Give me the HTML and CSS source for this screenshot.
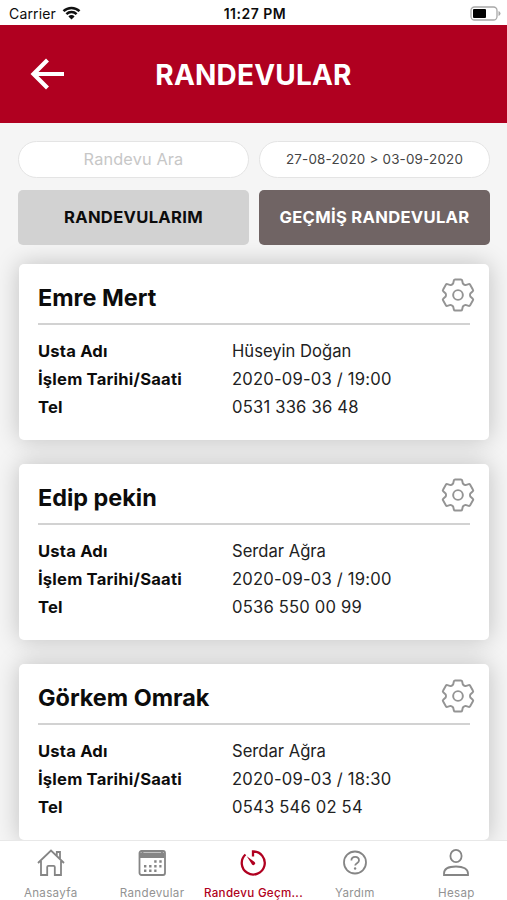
FILE: index.html
```html
<!DOCTYPE html>
<html lang="tr">
<head>
<meta charset="utf-8">
<meta name="viewport" content="width=device-width, initial-scale=1">
<title>Randevular</title>
<link rel="stylesheet" href="styles.css">
</head>
<body>

<svg class="defs" width="0" height="0">
  <symbol id="gear" viewBox="-17.5 -17.5 35 35">
    <path d="M-5-11.8L-4.2-15.2Q-4-16-3-16H3Q4-16 4.2-15.2L5-11.8Q6.5-10.2 7.7-10.2L11-11.2Q12-11.5 12.5-10.6L15.4-5.5Q16-4.5 15.2-3.9L12.7-1.6Q12 0 12.7 1.6L15.2 3.9Q16 4.5 15.4 5.5L12.5 10.6Q12 11.5 11 11.2L7.7 10.2Q6.5 10.2 5 11.8L4.2 15.2Q4 16 3 16H-3Q-4 16-4.2 15.2L-5 11.8Q-6.5 10.2-7.7 10.2L-11 11.2Q-12 11.5-12.5 10.6L-15.4 5.5Q-16 4.5-15.2 3.9L-12.7 1.6Q-12 0-12.7-1.6L-15.2-3.9Q-16-4.5-15.4-5.5L-12.5-10.6Q-12-11.5-11-11.2L-7.7-10.2Q-6.5-10.2-5-11.8Z"/>
    <circle r="5"/>
  </symbol>
</svg>

<div class="app">
  <div class="status">
    <div class="carrier">
      <span>Carrier</span>
      <svg width="19" height="14" viewBox="0 0 18 14">
        <path d="M1 5.2a11.5 11.5 0 0 1 16 0M3.9 8.2a7.3 7.3 0 0 1 10.2 0" fill="none" stroke="#111" stroke-width="2.5"/>
        <path d="M9 13.6L5.9 10.4a4.4 4.4 0 0 1 6.2 0z" fill="#111"/>
      </svg>
    </div>
    <div class="time">11:27 PM</div>
    <svg class="battery" width="31" height="15" viewBox="0 0 31 15">
      <rect x="1" y="1" width="26" height="13" rx="3.5" fill="#fff" stroke="#a8a8a8" stroke-width="1.3"/>
      <rect x="3" y="3" width="13" height="9" rx="1" fill="#000"/>
      <path d="M28.5 5v5q2-.8 2-2.5t-2-2.5z" fill="#a8a8a8"/>
    </svg>
  </div>

  <div class="header">
    <svg class="back" width="34" height="32" viewBox="0 0 34 32">
      <path d="M34 16H4M17.5 2L3.5 16l14 14" fill="none" stroke="#fff" stroke-width="4.2"/>
    </svg>
    <h1>RANDEVULAR</h1>
  </div>

  <div class="content">
    <div class="filters">
      <input type="text" class="search" placeholder="Randevu Ara">
      <div class="dates">27-08-2020 &gt; 03-09-2020</div>
      <button class="btn">RANDEVULARIM</button>
      <button class="btn btn-dark">GEÇMİŞ RANDEVULAR</button>
    </div>

    <div class="card">
      <div class="card-head">
        <h2>Emre Mert</h2>
        <svg class="gear"><use href="#gear"/></svg>
      </div>
      <div class="row"><b>Usta Adı</b><span>Hüseyin Doğan</span></div>
      <div class="row"><b>İşlem Tarihi/Saati</b><span class="num">2020-09-03 / 19:00</span></div>
      <div class="row"><b>Tel</b><span class="num">0531 336 36 48</span></div>
    </div>

    <div class="card">
      <div class="card-head">
        <h2>Edip pekin</h2>
        <svg class="gear"><use href="#gear"/></svg>
      </div>
      <div class="row"><b>Usta Adı</b><span>Serdar Ağra</span></div>
      <div class="row"><b>İşlem Tarihi/Saati</b><span class="num">2020-09-03 / 19:00</span></div>
      <div class="row"><b>Tel</b><span class="num">0536 550 00 99</span></div>
    </div>

    <div class="card">
      <div class="card-head">
        <h2>Görkem Omrak</h2>
        <svg class="gear"><use href="#gear"/></svg>
      </div>
      <div class="row"><b>Usta Adı</b><span>Serdar Ağra</span></div>
      <div class="row"><b>İşlem Tarihi/Saati</b><span class="num">2020-09-03 / 18:30</span></div>
      <div class="row"><b>Tel</b><span class="num">0543 546 02 54</span></div>
    </div>
  </div>

  <div class="tabs">
    <div class="tab">
      <svg width="30" height="30" viewBox="0 0 30 30">
        <path d="M2 15L15 2.5 28 15M5 13v14h6.200v-8q0-1.200 1.200-1.200h5.200q1.200 0 1.200 1.200v8H25V13M20.800 7.500V4h3.200v6.500"/>
      </svg>
      <span>Anasayfa</span>
    </div>
    <div class="tab">
      <svg width="30" height="30" viewBox="0 0 30 30">
        <rect x="2.500" y="3" width="25.500" height="24" rx="2"/>
        <path d="M3 4.500h24.500v5.500H3z" fill="#858585" stroke="none"/>
        <path d="M5.500 2v3M25 2v3"/>
        <path d="M17.200 13.500h7.500M7 18.200h17.500M7 22.800h12.500" stroke-width="2.4" stroke-dasharray="2.4 2.700"/>
      </svg>
      <span>Randevular</span>
    </div>
    <div class="tab active">
      <svg width="30" height="30" viewBox="0 0 30 30">
        <path d="M15 8.500V3.500A11.500 11.500 0 1 1 7.500 6.500" stroke-width="2.3"/>
        <path d="M8.800 8.300l7.800 5.700a1.800 1.800 0 1 1-2.600 2.600z" fill="#b00020" stroke="none"/>
      </svg>
      <span>Randevu Geçm...</span>
    </div>
    <div class="tab">
      <svg width="30" height="30" viewBox="0 0 30 30">
        <circle cx="15" cy="14.500" r="11"/>
        <path d="M11.400 12.500c0-4.900 7.600-4.900 7.600 0 0 2.700-3.800 2.600-3.800 5"/>
        <circle cx="15.100" cy="20.500" r="1.200" fill="#858585" stroke="none"/>
      </svg>
      <span>Yardım</span>
    </div>
    <div class="tab">
      <svg width="30" height="30" viewBox="0 0 30 30">
        <ellipse cx="15" cy="8" rx="5.600" ry="6.200"/>
        <path d="M3 27v-1.500c0-4.500 4.500-7 12-7s12 2.500 12 7V27z"/>
      </svg>
      <span>Hesap</span>
    </div>
  </div>
</div>

</body>
</html>
```
FILE: styles.css
```css
* {
  box-sizing: border-box;
}

body {
  margin: 0;
  font-family: Inter, "Liberation Sans", sans-serif;
  color: #0c0c0c;
}

.defs {
  display: block;
}

.app {
  height: 900px;
  display: flex;
  flex-direction: column;
  overflow: hidden;
  background-color: #f5f5f5;
}

/* Status bar */
.status {
  height: 25px;
  flex: none;
  display: grid;
  grid-template-columns: 1fr auto 1fr;
  align-items: center;
  padding: 1px 6px 0 9px;
  background: #fff;
  font-size: 14px;
}

.carrier {
  display: flex;
  align-items: center;
  gap: 6px;
  letter-spacing: 0.15px;
}

.time {
  font-weight: 600;
  letter-spacing: 0.5px;
}

.battery {
  justify-self: end;
}

/* Header */
.header {
  height: 98px;
  flex: none;
  display: grid;
  grid-template-columns: 80px 1fr 80px;
  align-items: center;
  background-color: #b00020;
  color: #fff;
}

.back {
  margin-left: 30px;
}

h1 {
  margin: 0;
  padding-top: 1px;
  text-align: center;
  font-size: 28px;
  font-weight: 700;
  letter-spacing: 0.2px;
}

.content {
  flex: 1;
  min-height: 0;
  overflow: hidden;
  padding: 18px 18px 0;
}

/* Search, dates and the two list buttons */
.filters {
  display: grid;
  grid-template-columns: 231px 231px;
  grid-template-rows: 37px 55px;
  gap: 12px 10px;
  margin-bottom: 18.5px;
}

.search, .dates {
  width: 100%;
  border: 1.5px solid #e4e4e4;
  border-radius: 19px;
  background: #fff;
  text-align: center;
  font-family: inherit;
}

.search {
  font-size: 16.3px;
  letter-spacing: 0.15px;
  outline: none;
  padding: 0 0 1px;
}

.search::placeholder {
  color: #c7c7c7;
}

.dates {
  font-size: 13.4px;
  line-height: 35px;
  letter-spacing: 0.2px;
  color: #444;
}

.btn {
  border: none;
  border-radius: 5px;
  padding: 0 0 1px;
  background-color: #d2d2d2;
  color: #0c0c0c;
  font-family: inherit;
  font-size: 16.6px;
  font-weight: 700;
  letter-spacing: 0.3px;
}

.btn-dark {
  background-color: #706464;
  color: #fff;
}

/* Cards */
.card {
  height: 176px;
  margin: 0 0 24.3px 1px;
  width: 470px;
  padding: 8px 19px 0;
  background: #fff;
  border-radius: 5px;
  box-shadow: 0 0 24px rgba(0, 0, 0, 0.22);
}

.card-head {
  height: 53px;
  display: flex;
  align-items: center;
  justify-content: space-between;
  border-bottom: 2px solid #d2d2d2;
  margin-bottom: 12px;
}

h2 {
  margin: 0;
  font-size: 23.4px;
  font-weight: 700;
}

.gear {
  width: 34px;
  height: 34px;
  margin: -4px -5px 0 0;
  fill: none;
  stroke: #949494;
  stroke-width: 2;
  stroke-linejoin: round;
}

.row {
  display: grid;
  grid-template-columns: 194px 1fr;
  line-height: 28px;
  font-size: 16.6px;
}

.row b {
  font-weight: 700;
  letter-spacing: 0.2px;
}

.row span {
  color: #222;
}

.row .num {
  letter-spacing: 0.2px;
}

/* Bottom tabs */
.tabs {
  height: 60px;
  flex: none;
  display: grid;
  grid-template-columns: repeat(5, 1fr);
  position: relative;
  border-top: 1px solid #e8e8e8;
  background: #fff;
}

.tab {
  display: flex;
  flex-direction: column;
  align-items: center;
  padding-top: 7px;
  min-width: 0;
  color: #939393;
  font-size: 11.6px;
  letter-spacing: 0.3px;
}

.tab svg {
  fill: none;
  stroke: #858585;
  stroke-width: 1.8;
  flex: none;
}

.tab span {
  line-height: 16px;
  margin-top: 7px;
  white-space: nowrap;
}

.active {
  color: #b00020;
  font-weight: 500;
}

.active svg {
  stroke: #b00020;
}
```
